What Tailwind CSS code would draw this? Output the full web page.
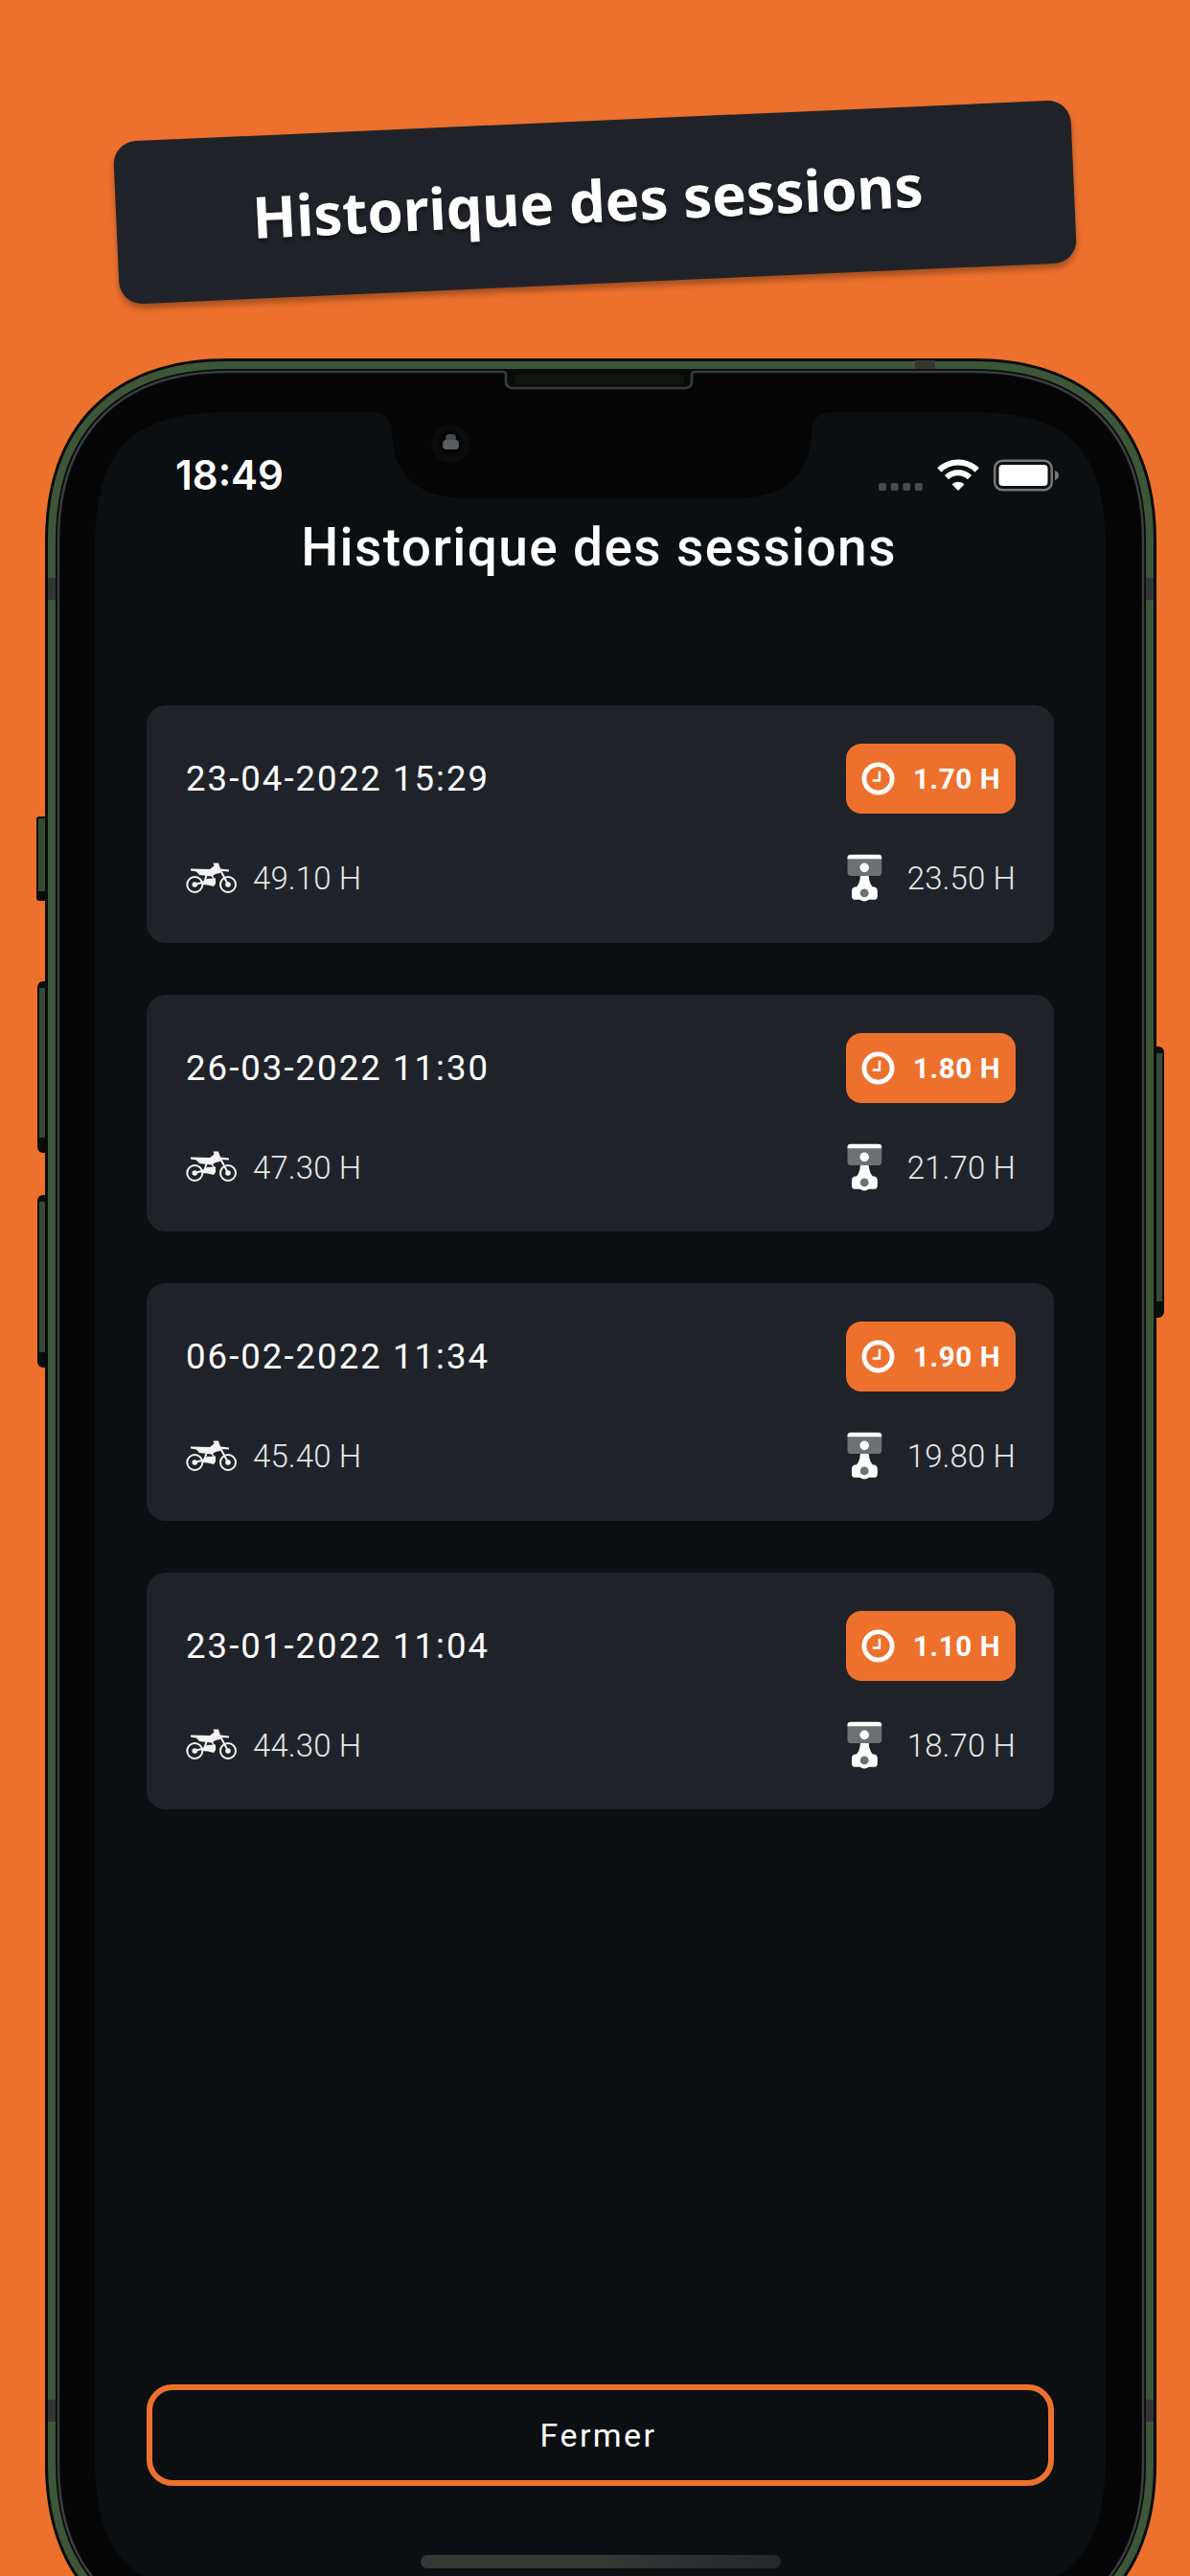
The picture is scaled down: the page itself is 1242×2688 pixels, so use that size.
<!DOCTYPE html>
<html lang="fr">
<head>
    <meta charset="UTF-8">
    <meta name="viewport" content="width=device-width, initial-scale=1.0">
    <title>Historique des sessions</title>
    <script src="https://cdn.jsdelivr.net/npm/@tailwindcss/browser@4"></script>
</head>
<body class="bg-[#ed712d] overflow-hidden">
    <div class="relative w-[1242px] h-[2688px] overflow-hidden bg-[#ed712d] text-white font-['Roboto',sans-serif]">

        <!-- Phone frame -->
        <svg class="absolute inset-0" width="1242" height="2688" viewBox="0 0 1242 2688" fill="none">
            <!-- side buttons -->
            <g fill="#354b32" stroke="#0a0e0a" stroke-width="2">
                <rect x="39" y="853" width="12" height="86" rx="2"/>
                <rect x="40" y="1025" width="12" height="177" rx="5"/>
                <rect x="40" y="1248" width="12" height="178" rx="5"/>
                <rect x="1202" y="1093" width="12" height="281" rx="5"/>
            </g>
            <g fill="#0a0e0a">
                <rect x="40" y="930" width="8" height="9"/>
                <rect x="41" y="1025" width="8" height="6"/>
                <rect x="41" y="1187" width="8" height="14"/>
                <rect x="41" y="1248" width="8" height="6"/>
                <rect x="41" y="1411" width="8" height="14"/>
                <rect x="1206" y="1093" width="7" height="6"/>
                <rect x="1206" y="1358" width="7" height="15"/>
            </g>
            <path fill="#080b08" d="M47 564C47 444 117 374 237 374H1017C1137 374 1207 444 1207 564V2571C1207 2691 1137 2761 1017 2761H237C117 2761 47 2691 47 2571Z"/>
            <path stroke="#3e5638" stroke-width="8" d="M54 564C54 448 121 381 237 381H1017C1133 381 1200 448 1200 564V2571C1200 2687 1133 2754 1017 2754H237C121 2754 54 2687 54 2571Z"/>
            <!-- antenna bands -->
            <g fill="#323632">
                <rect x="50" y="603" width="8" height="23"/>
                <rect x="1196" y="603" width="8" height="23"/>
                <rect x="50" y="2504" width="8" height="23"/>
                <rect x="1196" y="2504" width="8" height="23"/>
                <rect x="955" y="376" width="21" height="9"/>
            </g>
            <path fill="#050505" stroke="#3a3c40" stroke-width="2.5" d="M61 564C61 452 125 388 237 388H525Q528 388 528 391V398Q528 405 536 405H714Q722 405 722 398V391Q722 388 725 388H1017C1129 388 1193 452 1193 564V2571C1193 2683 1129 2747 1017 2747H237C125 2747 61 2683 61 2571Z"/>
            <path fill="#080b08" d="M530 385H720V398Q720 403 713 403H537Q530 403 530 398Z"/>
            <rect x="537" y="391" width="177" height="10" rx="4" fill="#121412"/>
            <!-- screen with its notch -->
            <path fill="#0b0f11" d="M99 575C99 467 136 430 244 430H387C402 430 409 438 409 452C411 500 440 520 490 520H766C816 520 845 500 847 452C847 438 854 430 869 430H1009C1117 430 1154 467 1154 575V2561C1154 2669 1117 2706 1009 2706H244C136 2706 99 2669 99 2561Z"/>
            <circle cx="470" cy="463" r="20" fill="#090b0d"/>
            <circle cx="470" cy="462" r="12" fill="#040405"/>
            <rect x="465" y="453" width="11" height="8" rx="4" fill="#46494c"/>
            <rect x="462" y="459" width="17" height="10" rx="4" fill="#5a5d60"/>
        </svg>

        <div class="relative flex flex-col items-center h-full">
            <!-- Banner -->
            <div class="mt-[126px] w-[1000px] h-[170px] -rotate-[2.53deg] rounded-3xl bg-[#1f2329] shadow-[0_5px_6px_rgba(0,0,0,0.3)] flex items-center justify-center">
                <span class="mr-4 mb-1 -rotate-[0.2deg] font-['Noto_Sans',sans-serif] font-bold text-[60px] leading-none whitespace-nowrap [text-shadow:0_4px_3px_rgba(0,0,0,0.35)]">Historique des sessions</span>
            </div>

            <!-- Status bar -->
            <div class="mt-[174px] w-[922px] h-[52px] ml-[46px] flex items-center justify-between">
                <span class="font-['Inter',sans-serif] font-semibold text-[42px] leading-none">18:49</span>
                <div class="flex items-center">
                    <svg width="188" height="36" viewBox="0 0 188 36" fill="none">
                        <g fill="#47494b">
                            <rect x="0" y="26" width="8" height="8" rx="2"/>
                            <rect x="12.600" y="26" width="8" height="8" rx="2"/>
                            <rect x="25.200" y="26" width="8" height="8" rx="2"/>
                            <rect x="37.800" y="26" width="8" height="8" rx="2"/>
                        </g>
                        <g stroke="#fff" stroke-width="6">
                            <path d="M63.300 12.500A28 28 0 0 1 102.700 12.500"/>
                            <path d="M71 20.200A17 17 0 0 1 95 20.200"/>
                        </g>
                        <path fill="#fff" d="M76.500 27.300A9.500 9.500 0 0 1 89.500 27.300L83.800 33.300Q83 34 82.200 33.300Z"/>
                        <rect x="121.200" y="2.700" width="59.500" height="30.500" rx="8" stroke="#76787a" stroke-width="2.500"/>
                        <rect x="125.500" y="7" width="51" height="22" rx="4" fill="#fff"/>
                        <path fill="#76787a" d="M184 13Q188 14.500 188 18T184 23Z"/>
                    </svg>
                </div>
            </div>

            <h1 class="mt-[13px] ml-[8px] h-[72px] text-[55px] font-medium leading-[72px] tracking-[1.4px] whitespace-nowrap">Historique des sessions</h1>

            <!-- Sessions -->
            <div id="sessions" class="mt-[129px] ml-[11px] w-[947px] flex flex-col gap-[54px]"></div>

            <button class="mt-[600px] ml-[11px] w-[947px] h-[106px] shrink-0 rounded-[27px] border-6 border-[#ed712d] pr-1 text-[34px] tracking-[2.4px]">Fermer</button>
            <div class="mt-[72px] ml-[12px] w-[376px] h-[14px] shrink-0 rounded-full bg-linear-to-r from-[#353735] via-[#353735] to-[#24272a]"></div>
        </div>
    </div>

    <svg class="hidden">
        <symbol id="icon-clock" viewBox="0 0 36 36">
            <circle cx="18" cy="18" r="15" fill="none" stroke="#fff" stroke-width="5"/>
            <path d="M19.500 10V20H12" fill="none" stroke="#fff" stroke-width="2.600"/>
        </symbol>
        <symbol id="icon-bike" viewBox="0 0 54 33">
            <g fill="none" stroke="#f4f4f2">
                <circle cx="9.300" cy="23" r="8" stroke-width="2"/>
                <circle cx="44" cy="23" r="8" stroke-width="2"/>
                <path d="M9 23L24 19M36 8L44 23M22 12L19 21" stroke-width="2"/>
                <path d="M27 13L30 19" stroke-width="1.500"/>
            </g>
            <circle cx="9.300" cy="23" r="2.800" fill="#f4f4f2"/>
            <circle cx="44" cy="23" r="2.800" fill="#f4f4f2"/>
            <path fill="#f4f4f2" d="M5 6.500L25 7L29.500 3.500L28.500 0.500L34 0.500L36 6.500L45 7.500V9.500L37 9L35.500 11L31 12L27 14.500L14 13L11 9.500L5 8.500Z"/>
            <path fill="#f4f4f2" d="M22 17L31 16.500V22L29 25L23 23.500L17 23L18 20.500Z"/>
        </symbol>
        <symbol id="icon-piston" viewBox="0 0 37 50">
            <path fill="#6d7074" d="M0.500 4H36.500V19Q36.500 23 33 23H4Q0.500 23 0.500 19Z"/>
            <path fill="#fff" d="M0.500 5V3.500Q0.500 0.500 4 0.500H33Q36.500 0.500 36.500 3.500V5Z"/>
            <circle cx="18.300" cy="14.300" r="4.800" fill="#fff"/>
            <path fill="#fff" d="M14 23H22.800Q23.500 31 27 34.500H29Q32 35.500 32 39V44Q32 48 28 48H23Q18.300 51.500 13.500 48H9Q5 48 5 44V39Q5 35.500 8 34.500H10Q13.500 31 14 23Z"/>
            <circle cx="18.300" cy="41" r="4.500" fill="#6d7074"/>
        </symbol>
    </svg>

    <script>
        const sessions = [
            { date: "23-04-2022 15:29", duration: "1.70", bike: "49.10", piston: "23.50" },
            { date: "26-03-2022 11:30", duration: "1.80", bike: "47.30", piston: "21.70" },
            { date: "06-02-2022 11:34", duration: "1.90", bike: "45.40", piston: "19.80" },
            { date: "23-01-2022 11:04", duration: "1.10", bike: "44.30", piston: "18.70" },
        ];

        document.getElementById("sessions").innerHTML = sessions.map(s => `
            <div class="h-[247.5px] rounded-[20px] bg-[#1f2329] pl-[41px] pr-[40px] pt-[40px] flex flex-col">
                <div class="flex items-center justify-between">
                    <span class="pt-0.5 text-[36.5px] tracking-[2.05px] whitespace-nowrap">${s.date}</span>
                    <div class="w-[177px] h-[73px] rounded-2xl bg-[#ed712d] flex items-center pl-[16px]">
                        <svg class="w-[35px] h-[35px]"><use href="#icon-clock"/></svg>
                        <span class="ml-[19px] pt-0.5 text-[29.5px] font-bold tracking-[0.6px] whitespace-nowrap">${s.duration} H</span>
                    </div>
                </div>
                <div class="mt-[42px] h-[50px] flex items-center justify-between font-light text-[33px] text-[#e6e7e8]">
                    <div class="flex items-center">
                        <svg class="w-[54px] h-[33px]"><use href="#icon-bike"/></svg>
                        <span class="ml-[16px] pt-0.5 tracking-[0.1px] whitespace-nowrap">${s.bike} H</span>
                    </div>
                    <div class="w-[177px] flex items-center">
                        <svg class="ml-px w-[37px] h-[50px]"><use href="#icon-piston"/></svg>
                        <span class="ml-[26px] pt-0.5 tracking-[0.1px] whitespace-nowrap">${s.piston} H</span>
                    </div>
                </div>
            </div>
        `).join("");
    </script>
</body>
</html>
